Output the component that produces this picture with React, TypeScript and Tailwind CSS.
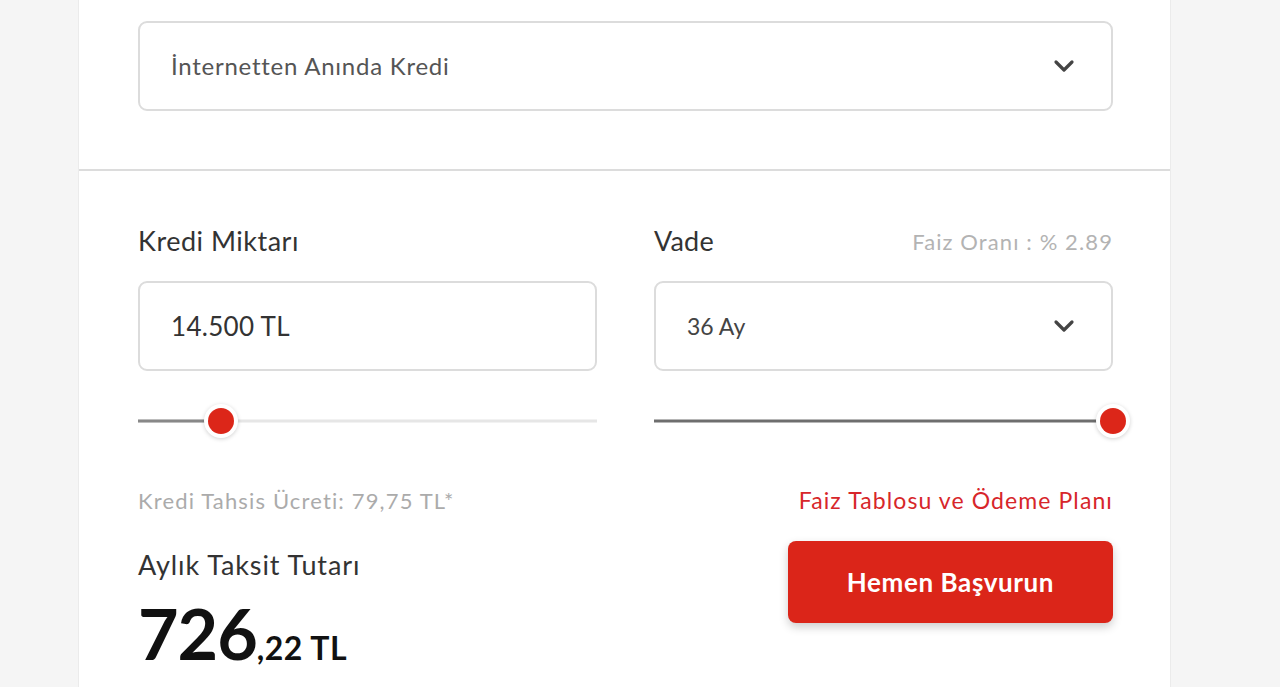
import React from "react";

function Chevron() {
  return (
    <svg width="22" height="14" viewBox="0 0 22 14" fill="none">
      <polyline points="3,3 11,11 19,3" stroke="#444" strokeWidth="3.2" strokeLinecap="round" strokeLinejoin="round" />
    </svg>
  );
}

function Thumb() {
  return (
    <div className="absolute top-1/2 -translate-x-1/2 -translate-y-1/2 w-[34px] h-[34px] rounded-full bg-white shadow-[0_1px_4px_rgba(0,0,0,0.18)] flex items-center justify-center">
      <div className="w-[26px] h-[26px] rounded-full bg-[#dc2619]" />
    </div>
  );
}

export default function App() {
  return (
    <div className="min-h-[687px] bg-[#f5f5f5] overflow-hidden" style={{ fontFamily: "Lato, 'Noto Sans', sans-serif" }}>
      <div className="ml-[78px] w-[1093px] bg-white border-x border-[#ebebeb] h-[687px]">
        <div className="pt-[21px] pb-[58px] pl-[59px] pr-[57px] border-b-2 border-[#dcdcdc]">
          <div className="h-[90px] rounded-[9px] border-2 border-[#dcdcdc] flex items-center justify-between pl-[31px] pr-[36px]">
            <span className="text-[24px] tracking-[0.75px] text-[#555]">İnternetten Anında Kredi</span>
            <Chevron />
          </div>
        </div>
        <div className="pl-[59px] pr-[57px] pt-[52px]">
          <div className="grid grid-cols-2 gap-x-[57px]">
            <div>
              <div className="h-[36px] flex items-center text-[27px] tracking-[0.5px] text-[#333] mb-[22px]">Kredi Miktarı</div>
              <div className="h-[90px] rounded-[9px] border-2 border-[#dcdcdc] flex items-center pl-[31px]">
                <span className="text-[26px] tracking-[0.3px] text-[#333]">14.500 TL</span>
              </div>
              <div className="relative h-[28px] mt-[36px]">
                <div className="absolute left-0 right-0 top-1/2 -translate-y-1/2 h-[3px] bg-[#e6e6e6]" />
                <div className="absolute left-0 w-[83px] top-1/2 -translate-y-1/2 h-[3px] bg-[#888]" />
                <div className="absolute left-[83px] top-0 h-full">
                  <Thumb />
                </div>
              </div>
            </div>
            <div>
              <div className="h-[36px] flex items-center justify-between mb-[22px]">
                <span className="text-[27px] tracking-[0.2px] text-[#333]">Vade</span>
                <span className="text-[22px] tracking-[1.1px] text-[#b3b3b3]">Faiz Oranı : % 2.89</span>
              </div>
              <div className="h-[90px] rounded-[9px] border-2 border-[#dcdcdc] flex items-center justify-between pl-[31px] pr-[36px]">
                <span className="text-[23px] text-[#444]">36 Ay</span>
                <Chevron />
              </div>
              <div className="relative h-[28px] mt-[36px]">
                <div className="absolute left-0 right-0 top-1/2 -translate-y-1/2 h-[3px] bg-[#6e6e6e]" />
                <div className="absolute right-0 top-0 h-full">
                  <Thumb />
                </div>
              </div>
            </div>
          </div>
          <div className="flex justify-between mt-[51px]">
            <div>
              <div className="h-[28px] flex items-center text-[22px] tracking-[1.15px] text-[#ababab]">Kredi Tahsis Ücreti: 79,75 TL*</div>
              <div className="h-[32px] flex items-center text-[27px] tracking-[0.9px] text-[#333] mt-[35px]">Aylık Taksit Tutarı</div>
              <div className="flex items-baseline text-[#111] font-bold mt-[17px] leading-none">
                <span className="text-[70px] tracking-[-1px]">726</span>
                <span className="text-[32px] tracking-[0.5px]">,22 TL</span>
              </div>
            </div>
            <div className="flex flex-col items-end">
              <div className="h-[28px] flex items-center text-[23px] tracking-[1.1px] text-[#d7262a]">Faiz Tablosu ve Ödeme Planı</div>
              <button className="mt-[27px] w-[325px] h-[82px] rounded-[8px] bg-[#db2519] text-white font-bold text-[26px] tracking-[0.6px] shadow-[0_4px_10px_rgba(0,0,0,0.2)]">
                Hemen Başvurun
              </button>
            </div>
          </div>
        </div>
      </div>
    </div>
  );
}
